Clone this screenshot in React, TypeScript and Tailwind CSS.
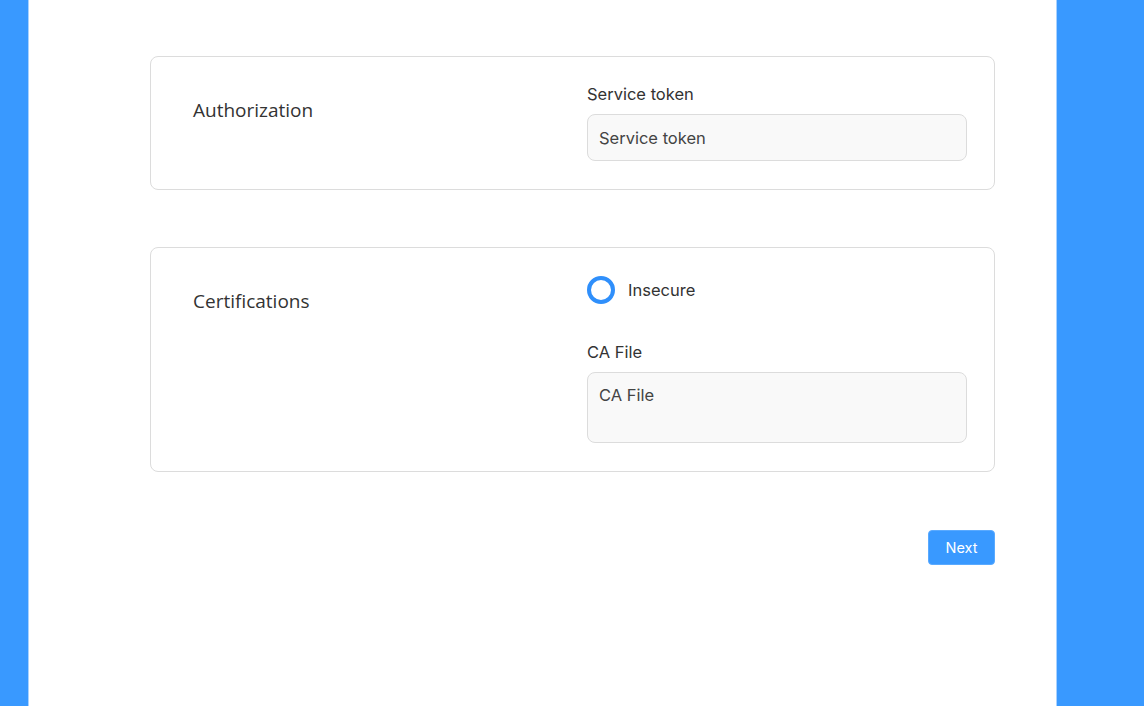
import React from "react";

function Card({ title, children }: { title: string; children: React.ReactNode }) {
  return (
    <div className="flex rounded-[8px] border border-[#dcdcdc] bg-white pl-[42px] pr-[27px] pt-[26px] pb-[28px]">
      <div className="w-[394px] shrink-0 pt-[13px]">
        <h2 className="text-[19px] leading-[28px] text-[#333] font-['Open_Sans',sans-serif]">{title}</h2>
      </div>
      <div className="flex-1 flex flex-col">{children}</div>
    </div>
  );
}

export default function App() {
  return (
    <div className="flex h-[706px] w-[1144px] overflow-hidden bg-[#3999ff] font-['Inter',sans-serif]">
      <div className="w-[29px] shrink-0 border-r border-[#a9d2ff]" />
      <div className="w-[1027px] shrink-0 bg-white pl-[121px] pr-[61px] pt-[56px]">
        <div className="flex flex-col gap-[57px]">
          <Card title="Authorization">
            <label className="text-[16.5px] leading-[22px] text-[#333]">Service token</label>
            <input
              className="mt-[9px] h-[47px] w-[380px] rounded-[8px] border border-[#dcdcdc] bg-[#f9f9f9] px-[11px] text-[16.5px] text-[#333] placeholder:text-[#444] outline-none"
              placeholder="Service token"
            />
          </Card>
          <Card title="Certifications">
            <div className="flex items-center h-[32px] gap-[13px]">
              <span className="h-[28px] w-[28px] rounded-full border-[4px] border-[#2f8ffb] bg-white" />
              <span className="text-[16.5px] text-[#333]">Insecure</span>
            </div>
            <label className="mt-[35px] text-[16.5px] leading-[22px] text-[#333]">CA File</label>
            <textarea
              className="mt-[9px] h-[71px] w-[380px] resize-none rounded-[8px] border border-[#dcdcdc] bg-[#f9f9f9] px-[11px] py-[11px] text-[16.5px] leading-[22px] text-[#333] placeholder:text-[#444] outline-none"
              placeholder="CA File"
            />
          </Card>
        </div>
        <div className="mt-[58px] flex justify-end">
          <button className="h-[35px] w-[67px] rounded-[4px] border border-[#5aaaff] bg-[#3999ff] text-[14.5px] text-white">
            Next
          </button>
        </div>
      </div>
      <div className="flex-1 border-l border-[#a9d2ff]" />
    </div>
  );
}
